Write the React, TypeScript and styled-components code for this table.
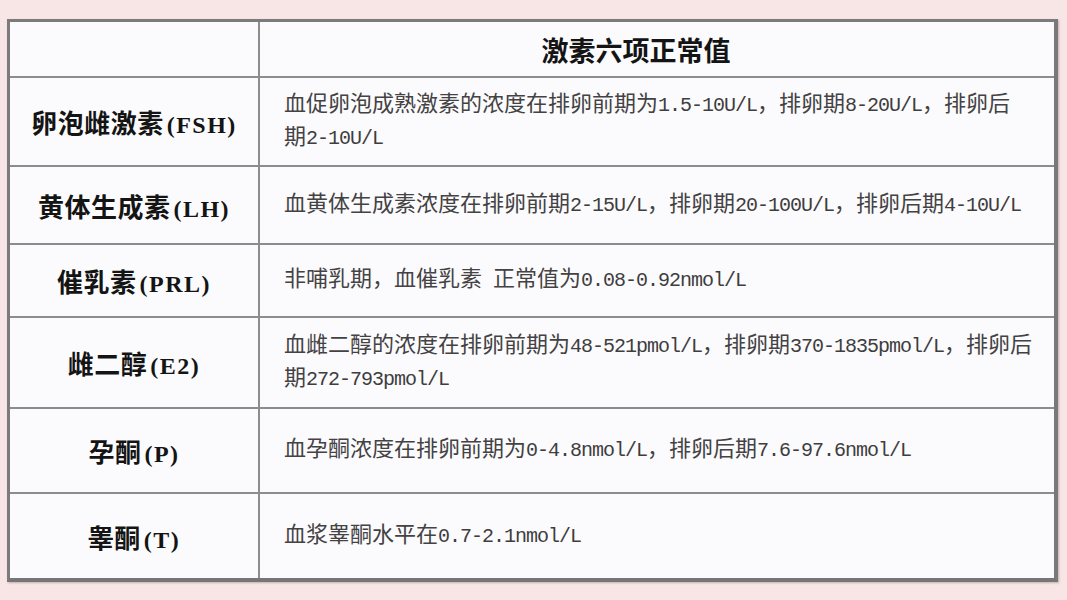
import React from "react";
import styled, { createGlobalStyle } from "styled-components";

const GlobalStyle = createGlobalStyle`
  html, body {
    margin: 0;
    padding: 0;
    background: #f8e6e6;
  }
`;

const Page = styled.div`
  width: 1067px;
  height: 600px;
  box-sizing: border-box;
  padding: 19px 9px 18px 7px;
  background: #f8e6e6;
`;

const Frame = styled.div`
  display: grid;
  grid-template-columns: 250px 1fr;
  background: #fbfbfd;
  border-top: 3px solid #7c7a7b;
  border-left: 3px solid #7c7a7b;
  border-right: 4px solid #7a7879;
  border-bottom: 4px solid #777576;
  box-shadow: 1px 1px 2px rgba(90, 80, 80, 0.35);
`;

const Cell = styled.div<{ $h: number; $last?: boolean }>`
  box-sizing: border-box;
  height: ${(p) => p.$h}px;
  display: flex;
  align-items: center;
  border-bottom: ${(p) => (p.$last ? "none" : "2px solid #8d8b8c")};
`;

const LabelCell = styled(Cell)`
  justify-content: center;
  border-right: 2px solid #8d8b8c;
  font-family: "Noto Sans CJK SC", "Noto Sans", sans-serif;
  font-weight: 700;
  font-size: 26px;
  color: #141414;
  letter-spacing: 0.5px;
`;

const HeadCell = styled(Cell)`
  justify-content: center;
  padding-right: 42px;
  font-family: "Noto Sans CJK SC", "Noto Sans", sans-serif;
  font-weight: 700;
  font-size: 27px;
  color: #141414;
`;

const ValueCell = styled(Cell)`
  padding-left: 24px;
  font-family: "Noto Sans CJK SC", sans-serif;
  font-weight: 400;
  font-size: 22px;
  color: #444243;
`;

const Lines = styled.div`
  display: flex;
  flex-direction: column;
  margin-top: -4px;
`;

const Line = styled.div`
  white-space: nowrap;
  line-height: 28px;
`;

const Mono = styled.span`
  font-family: "Liberation Mono", monospace;
  font-size: 20px;
  letter-spacing: -1px;
  color: #3f3d3e;
`;

const SerifBold = styled.span`
  font-family: "Liberation Serif", serif;
  font-weight: 700;
  font-size: 24px;
  letter-spacing: 1.5px;
  margin-left: 3px;
`;

const splitRuns = (text: string, Latin: typeof Mono) =>
  text.split(/([\x20-\x7e]+)/).map((part, i) =>
    /[\x20-\x7e]/.test(part) ? <Latin key={i}>{part}</Latin> : part
  );

type Row = { name: string; lines: string[]; h: number };

const rows: Row[] = [
  {
    name: "卵泡雌激素(FSH)",
    lines: [
      "血促卵泡成熟激素的浓度在排卵前期为1.5-10U/L，排卵期8-20U/L，排卵后",
      "期2-10U/L",
    ],
    h: 89,
  },
  {
    name: "黄体生成素(LH)",
    lines: ["血黄体生成素浓度在排卵前期2-15U/L，排卵期20-100U/L，排卵后期4-10U/L"],
    h: 78,
  },
  {
    name: "催乳素(PRL)",
    lines: ["非哺乳期，血催乳素 正常值为0.08-0.92nmol/L"],
    h: 73,
  },
  {
    name: "雌二醇(E2)",
    lines: [
      "血雌二醇的浓度在排卵前期为48-521pmol/L，排卵期370-1835pmol/L，排卵后",
      "期272-793pmol/L",
    ],
    h: 91,
  },
  {
    name: "孕酮(P)",
    lines: ["血孕酮浓度在排卵前期为0-4.8nmol/L，排卵后期7.6-97.6nmol/L"],
    h: 85,
  },
  {
    name: "睾酮(T)",
    lines: ["血浆睾酮水平在0.7-2.1nmol/L"],
    h: 84,
  },
];

const App = () => {
  return (
    <Page>
      <GlobalStyle />
      <Frame>
        <LabelCell $h={56} />
        <HeadCell $h={56}>激素六项正常值</HeadCell>
        {rows.map((row, i) => {
          const last = i === rows.length - 1;
          return (
            <React.Fragment key={row.name}>
              <LabelCell $h={row.h} $last={last}>
                <span>{splitRuns(row.name, SerifBold)}</span>
              </LabelCell>
              <ValueCell $h={row.h} $last={last}>
                <Lines>
                  {row.lines.map((line) => (
                    <Line key={line}>{splitRuns(line, Mono)}</Line>
                  ))}
                </Lines>
              </ValueCell>
            </React.Fragment>
          );
        })}
      </Frame>
    </Page>
  );
};

export default App;
